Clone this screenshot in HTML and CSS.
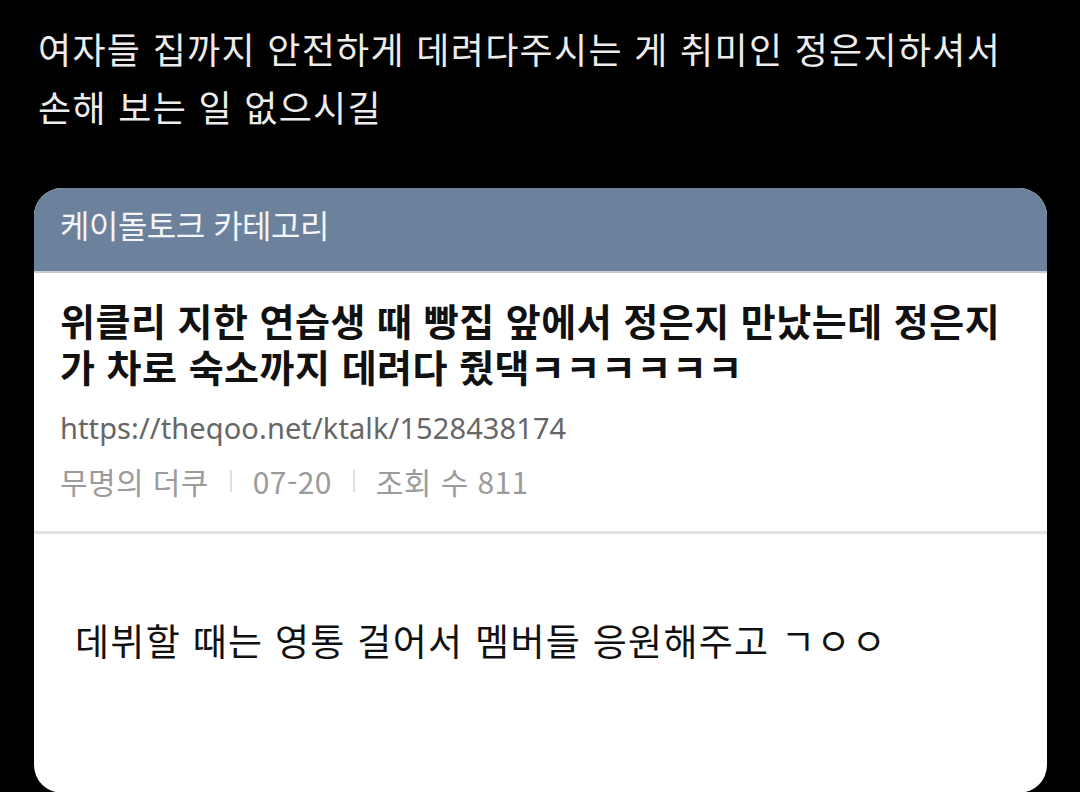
FILE: index.html
```html
<!DOCTYPE html>
<html lang="ko">
<head>
  <meta charset="UTF-8" />
  <title>정은지</title>
  <meta name="viewport" content="width=device-width, initial-scale=1.0" />
  <link rel="stylesheet" href="styles.css">
</head>
<body>

  <div class="caption">
    여자들 집까지 안전하게 데려다주시는 게 취미인 정은지하셔서<br>
    손해 보는 일 없으시길
  </div>

  <div class="card">
    <div class="card-head">케이돌토크 카테고리</div>

    <div class="preview">
      <div class="title">위클리 지한 연습생 때 빵집 앞에서 정은지 만났는데 정은지가 차로 숙소까지 데려다 줬댁ㅋㅋㅋㅋㅋㅋ</div>
      <div class="url">https://theqoo.net/ktalk/1528438174</div>
      <div class="meta">
        <span>무명의 더쿠</span>
        <span class="sep"></span>
        <span>07-20</span>
        <span class="sep"></span>
        <span>조회 수 811</span>
      </div>
    </div>

    <div class="body-text">데뷔할 때는 영통 걸어서 멤버들 응원해주고 ㄱㅇㅇ</div>
  </div>

</body>
</html>
```

FILE: styles.css
```css
:root {
  --head-bg: #6c819c;
  --font: "Noto Sans CJK KR", "Noto Sans", sans-serif;
}
body {
  margin: 0;
  background: #000;
  font-family: var(--font);
  overflow: hidden;
}
.caption {
  padding: 19px 0 0 38px;
  font-size: 36px;
  line-height: 58px;
  color: #ececec;
  letter-spacing: 1.3px;
}
.card {
  margin: 53px 33px 0 34px;
  background: #fff;
  border-radius: 28px;
  overflow: hidden;
}
.card-head {
  background: var(--head-bg);
  color: #f3f5f8;
  font-size: 32px;
  letter-spacing: -0.5px;
  line-height: 40px;
  padding: 16px 26px 27px;
  border-bottom: 2px solid #c7ccd3;
}
.preview {
  padding: 24px 26px 30px;
  border-bottom: 3px solid #e2e2e2;
}
.title {
  font-size: 38px;
  font-weight: bold;
  line-height: 46px;
  color: #111;
  word-break: break-all;
  letter-spacing: 0.5px;
}
.url {
  margin-top: 19px;
  font-family: "Noto Sans", sans-serif;
  font-size: 29px;
  line-height: 40px;
  color: #666;
  letter-spacing: 0.1px;
}
.meta {
  margin-top: 13px;
  display: flex;
  align-items: center;
  gap: 21px;
  font-size: 30px;
  line-height: 40px;
  color: #9b9b9b;
  letter-spacing: 0.4px;
}
.meta .sep {
  width: 2px;
  height: 22px;
  background: #e0e0e0;
}
.body-text {
  padding: 81px 41px 128px;
  font-size: 37px;
  line-height: 50px;
  color: #111;
  letter-spacing: 1.3px;
}
```
